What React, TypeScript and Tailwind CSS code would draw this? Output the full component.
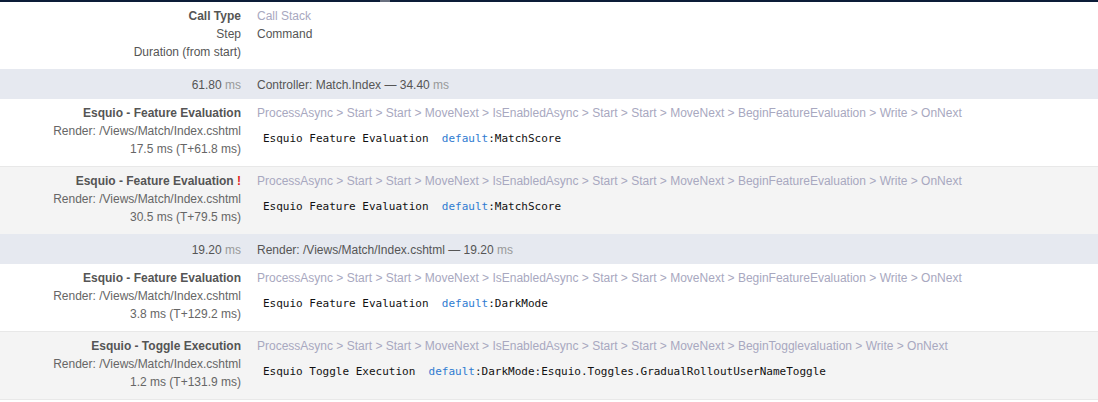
const sans = "font-['Liberation_Sans',Arial,sans-serif]";

type Entry = {
  title: string;
  warn?: boolean;
  render: string;
  timing: string;
  stack: string[];
  label: string;
  key: string;
  alt?: boolean;
  last?: boolean;
};

const featureStack = [
  "ProcessAsync",
  "Start",
  "Start",
  "MoveNext",
  "IsEnabledAsync",
  "Start",
  "Start",
  "MoveNext",
  "BeginFeatureEvaluation",
  "Write",
  "OnNext",
];

const toggleStack = [
  "ProcessAsync",
  "Start",
  "Start",
  "MoveNext",
  "IsEnabledAsync",
  "Start",
  "Start",
  "MoveNext",
  "BeginTogglevaluation",
  "Write",
  "OnNext",
];

function SectionRow({ start, name, dur }: { start: string; name: string; dur: string }) {
  return (
    <div className="flex h-[30px] items-center pt-px bg-[#e6e9f0] text-[12px] text-[#555]">
      <div className="w-[245px] pr-1 text-right">
        {start} <span className="text-[#999]">ms</span>
      </div>
      <div className="pl-3">
        {name} — {dur} <span className="text-[#999]">ms</span>
      </div>
    </div>
  );
}

function EntryRow({ e }: { e: Entry }) {
  return (
    <div
      className={
        "flex pt-[5px] pb-[8px] leading-[18px] text-[12px] " +
        (e.alt ? "border-t border-[#e8e8e8] bg-[#f4f4f4] " : "bg-white ") +
        (e.last ? "border-b border-[#e8e8e8]" : "")
      }
    >
      <div className="w-[245px] shrink-0 pr-1 text-right text-[#666]">
        <div className="font-bold text-[#555]">
          {e.title}
          {e.warn && <span className="text-[#e0241b]"> !</span>}
        </div>
        <div>{e.render}</div>
        <div>{e.timing}</div>
      </div>
      <div className="pl-3 min-w-0">
        <div className="text-[#a8a8c0] whitespace-nowrap">{e.stack.join(" > ")}</div>
        <pre className="mt-[10px] pl-[6px] font-['DejaVu_Sans_Mono',monospace] text-[11px] leading-[14px] text-[#111]">
          {e.label}
          {"  "}
          <span className="text-[#2f7bd1]">default</span>:{e.key}
        </pre>
      </div>
    </div>
  );
}

const first: Entry[] = [
  {
    title: "Esquio - Feature Evaluation",
    render: "Render: /Views/Match/Index.cshtml",
    timing: "17.5 ms (T+61.8 ms)",
    stack: featureStack,
    label: "Esquio Feature Evaluation",
    key: "MatchScore",
  },
  {
    title: "Esquio - Feature Evaluation",
    warn: true,
    render: "Render: /Views/Match/Index.cshtml",
    timing: "30.5 ms (T+79.5 ms)",
    stack: featureStack,
    label: "Esquio Feature Evaluation",
    key: "MatchScore",
    alt: true,
  },
];

const second: Entry[] = [
  {
    title: "Esquio - Feature Evaluation",
    render: "Render: /Views/Match/Index.cshtml",
    timing: "3.8 ms (T+129.2 ms)",
    stack: featureStack,
    label: "Esquio Feature Evaluation",
    key: "DarkMode",
  },
  {
    title: "Esquio - Toggle Execution",
    render: "Render: /Views/Match/Index.cshtml",
    timing: "1.2 ms (T+131.9 ms)",
    stack: toggleStack,
    label: "Esquio Toggle Execution",
    key: "DarkMode:Esquio.Toggles.GradualRolloutUserNameToggle",
    alt: true,
    last: true,
  },
];

export default function App() {
  return (
    <div className={"min-h-screen bg-white " + sans}>
      {/* top bar */}
      <div className="flex h-[2px] bg-[#0c1c38]">
        <div className="ml-[380px] h-[2px] w-[10px] bg-[#6a7180]" />
      </div>

      {/* header */}
      <div className="flex pt-[5px] pb-[8px] text-[12px] leading-[18px]">
        <div className="w-[245px] pr-1 text-right text-[#555]">
          <div className="font-bold">Call Type</div>
          <div>Step</div>
          <div>Duration (from start)</div>
        </div>
        <div className="pl-3">
          <div className="text-[#a8a8c0]">Call Stack</div>
          <div className="text-[#555]">Command</div>
        </div>
      </div>

      <SectionRow start="61.80" name="Controller: Match.Index" dur="34.40" />
      {first.map((e, i) => (
        <EntryRow key={i} e={e} />
      ))}

      <SectionRow start="19.20" name="Render: /Views/Match/Index.cshtml" dur="19.20" />
      {second.map((e, i) => (
        <EntryRow key={i} e={e} />
      ))}
    </div>
  );
}
